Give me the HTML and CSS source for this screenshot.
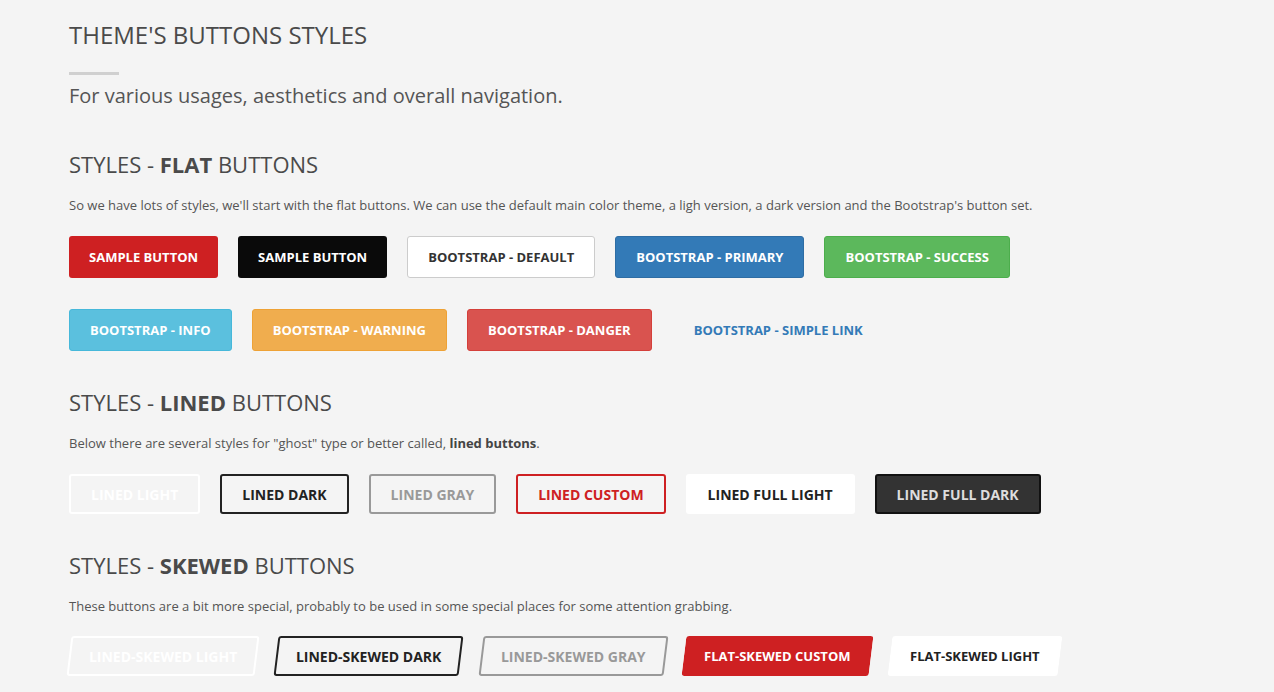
FILE: index.html
```html
<!DOCTYPE html>
<html lang="en">
<head>
    <meta charset="UTF-8">
    <title>Theme's Buttons Styles</title>
    <link rel="stylesheet" href="styles.css">
</head>
<body>
    <div class="page">
        <header class="intro">
            <h1>THEME'S BUTTONS STYLES</h1>
            <span class="sep"></span>
            <p class="lead">For various usages, aesthetics and overall navigation.</p>
        </header>

        <!-- Flat -->
        <section class="group">
            <h2>STYLES - <b>FLAT</b> BUTTONS</h2>
            <p class="desc">So we have lots of styles, we'll start with the flat buttons. We can use the default main color theme, a ligh version, a dark version and the Bootstrap's button set.</p>
            <div class="btn-row">
                <a class="btn btn-red">Sample button</a>
                <a class="btn btn-black">Sample button</a>
                <a class="btn bs btn-default">Bootstrap - default</a>
                <a class="btn bs btn-primary">Bootstrap - primary</a>
                <a class="btn bs btn-success">Bootstrap - success</a>
            </div>
            <div class="btn-row">
                <a class="btn bs btn-info">Bootstrap - info</a>
                <a class="btn bs btn-warning">Bootstrap - warning</a>
                <a class="btn bs btn-danger">Bootstrap - danger</a>
                <a class="btn bs btn-link">Bootstrap - simple link</a>
            </div>
        </section>

        <!-- Lined -->
        <section class="group">
            <h2>STYLES - <b>LINED</b> BUTTONS</h2>
            <p class="desc">Below there are several styles for "ghost" type or better called, <b>lined buttons</b>.</p>
            <div class="btn-row">
                <a class="btn lined lined-light">Lined light</a>
                <a class="btn lined lined-dark">Lined dark</a>
                <a class="btn lined lined-gray">Lined gray</a>
                <a class="btn lined lined-custom">Lined custom</a>
                <a class="btn lined full-light">Lined full light</a>
                <a class="btn lined full-dark">Lined full dark</a>
            </div>
        </section>

        <!-- Skewed -->
        <section class="group">
            <h2>STYLES - <b>SKEWED</b> BUTTONS</h2>
            <p class="desc">These buttons are a bit more special, probably to be used in some special places for some attention grabbing.</p>
            <div class="btn-row row-skew">
                <a class="btn skew lined lined-light"><span>Lined-skewed light</span></a>
                <a class="btn skew lined lined-dark"><span>Lined-skewed dark</span></a>
                <a class="btn skew lined lined-gray"><span>Lined-skewed gray</span></a>
                <a class="btn skew flat-custom"><span>Flat-skewed custom</span></a>
                <a class="btn skew flat-light"><span>Flat-skewed light</span></a>
            </div>
        </section>
    </div>
</body>
</html>
```

FILE: styles.css
```css
body {
    margin: 0;
    background-color: #f4f4f4;
    font-family: "Open Sans", Arial, sans-serif;
    color: #555;
}

.page {
    padding: 20px 69px 0;
}

h1 {
    margin: 0;
    font-size: 24px;
    font-weight: 400;
    line-height: 30px;
    color: #4a4a4a;
}

.sep {
    display: block;
    width: 50px;
    height: 3px;
    background-color: #d0d0d0;
    margin-top: 22px;
}

.lead {
    margin: 8px 0 0;
    font-size: 20px;
    line-height: 26px;
    color: #555;
}

.group {
    margin-top: 41px;
}

.group + .group {
    margin-top: 37px;
}

h2 {
    margin: 0;
    font-size: 22px;
    font-weight: 400;
    line-height: 28px;
    color: #4a4a4a;
}

h2 b {
    font-weight: 700;
}

.desc {
    margin: 17px 0 0;
    font-size: 13px;
    line-height: 20px;
    color: #555;
}

.desc b {
    font-weight: 700;
    color: #444;
}

.btn-row {
    display: flex;
    gap: 20px;
    margin-top: 21px;
}

.btn-row + .btn-row {
    margin-top: 31px;
}

.row-skew {
    gap: 19px;
    margin-top: 20px;
}

/* base button */
.btn {
    display: flex;
    align-items: center;
    height: 42px;
    box-sizing: border-box;
    padding: 0 19px;
    border: 1px solid transparent;
    border-radius: 3px;
    font-size: 13px;
    font-weight: 700;
    text-transform: uppercase;
    white-space: nowrap;
    cursor: pointer;
}

.bs { padding: 0 20px; }

.btn-red { background-color: #ce2022; color: #fff; }
.btn-black { background-color: #0a0a0a; color: #fff; }
.btn-default { background-color: #fff; border-color: #ccc; color: #333; }
.btn-primary { background-color: #337ab7; border-color: #2e6da4; color: #fff; }
.btn-success { background-color: #5cb85c; border-color: #4cae4c; color: #fff; }
.btn-info { background-color: #5bc0de; border-color: #46b8da; color: #fff; }
.btn-warning { background-color: #f0ad4e; border-color: #eea236; color: #fff; }
.btn-danger { background-color: #d9534f; border-color: #d43f3a; color: #fff; }
.btn-link { background: none; color: #337ab7; padding: 0 21px; }

/* lined */
.lined {
    height: 40px;
    border-width: 2px;
    padding: 0 20px;
    font-size: 14px;
    font-weight: 700;
}

.lined-light { border-color: #fff; color: #fff; }
.lined-dark { border-color: #222; color: #222; }
.lined-gray { border-color: #999; color: #999; }
.lined-custom { border-color: #ce2022; color: #ce2022; }
.full-light { background-color: #fff; border-color: #fff; color: #222; }
.full-dark { background-color: #333; border-color: #111; color: #ddd; }

/* skewed */
.skew {
    transform: skewX(-7deg);
    height: 40px;
    padding: 0 19px;
    font-size: 13px;
    font-weight: 700;
}

.skew.lined {
    padding: 0 18px;
    font-size: 14px;
}

.skew span {
    display: inline-block;
    transform: skewX(7deg);
}

.flat-custom { background-color: #ce2022; color: #fff; }
.flat-light { background-color: #fff; color: #222; }
```
